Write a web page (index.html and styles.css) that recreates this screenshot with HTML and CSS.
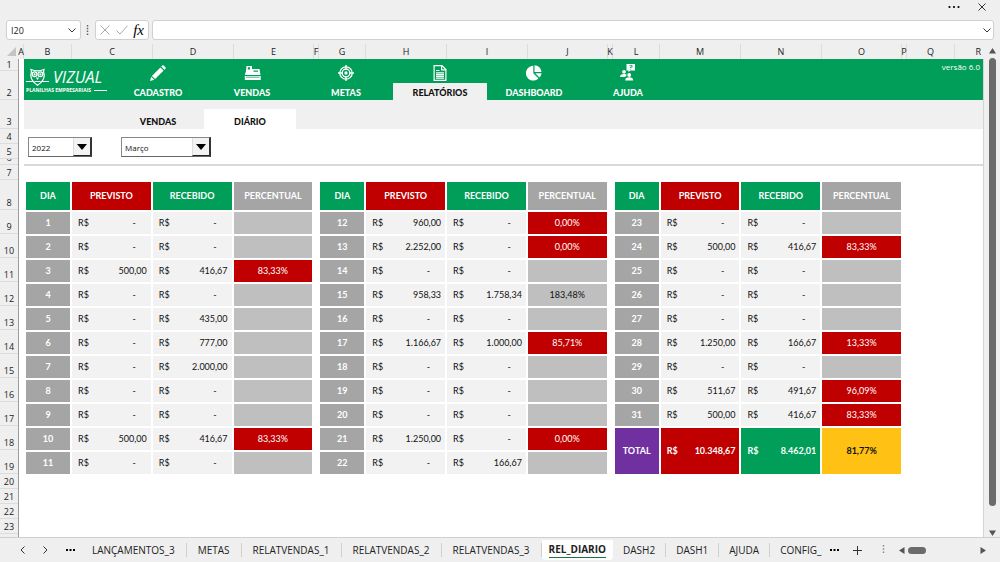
FILE: index.html
```html
<!DOCTYPE html>
<html lang="pt-BR">
<head>
<meta charset="utf-8">
<meta name="viewport" content="width=device-width, initial-scale=1">
<title>REL_DIARIO</title>
<link rel="stylesheet" href="styles.css">
</head>
<body>
<div class="window-bar">
  <button class="plain" aria-label="Mais opções"><svg width="12" height="12" viewBox="0 0 12 12"><circle cx="1.5" cy="6" r="1.1"/><circle cx="6" cy="6" r="1.1"/><circle cx="10.500" cy="6" r="1.1"/></svg></button>
  <button class="plain" aria-label="Fechar"><svg class="line" width="8" height="8" viewBox="0 0 8 8"><path d="M.5.5l7 7M7.500.5l-7 7"/></svg></button>
</div>

<div class="formula-bar">
  <div class="name-box">
    <input type="text" value="I20" aria-label="Caixa de nome">
    <svg class="line" width="8" height="5" viewBox="0 0 8 5"><path d="M.5.5L4 4 7.500.5"/></svg>
  </div>
  <svg class="grip" width="3" height="10" viewBox="0 0 3 10"><path d="M1.500 0v10" stroke="#666" stroke-width="1.500" stroke-dasharray="1.500 1.300"/></svg>
  <div class="formula-actions">
    <button class="plain" aria-label="Cancelar"><svg class="line soft" width="10" height="10" viewBox="0 0 10 10"><path d="M.5.5l9 9M9.500.5l-9 9"/></svg></button>
    <button class="plain" aria-label="Inserir"><svg class="line soft" width="12" height="10" viewBox="0 0 12 10"><path d="M.5 5.500L4 9 11.500.8"/></svg></button>
    <button class="plain fx" aria-label="Inserir função">fx</button>
  </div>
  <div class="formula-input">
    <input type="text" aria-label="Barra de fórmulas">
    <svg class="line" width="8" height="5" viewBox="0 0 8 5"><path d="M.5.5L4 4 7.500.5"/></svg>
  </div>
</div>

<main class="workbook">
  <div class="corner"><svg width="9" height="9" viewBox="0 0 9 9"><path d="M9 0v9H0z" fill="#c4c4c4"/></svg></div>
  <div class="columns">
    <span>A</span><span>B</span><span>C</span><span>D</span><span>E</span><span>F</span><span>G</span><span>H</span><span>I</span><span>J</span><span>K</span><span>L</span><span>M</span><span>N</span><span>O</span><span>P</span><span>Q</span><span class="last">R</span>
  </div>
  <div class="rows">
    <span class="r12">1</span><span class="r29">2</span><span class="r29">3</span><span class="r15">4</span><span class="r15">5</span><span class="r6">6</span><span class="r15">7</span><span class="r30">8</span>
    <span>9</span><span>10</span><span>11</span><span>12</span><span>13</span><span>14</span><span>15</span><span>16</span><span>17</span><span>18</span><span>19</span>
    <span class="r15">20</span><span class="r15">21</span><span class="r15">22</span><span class="r15">23</span>
  </div>

  <div class="sheet">
    <header class="banner">
      <div class="logo">
        <div class="brand">
          <svg width="23" height="18" viewBox="0 0 23 18" fill="none" stroke="#fff" stroke-width="1.200"><path d="M5 1.500c2 .8 4 1.300 6.500 1.300S16 2.300 18 1.500c-.6 1.500-.4 3 .1 4.500.7 4-1.600 8-6.600 11.300C6.500 14 4.300 10 5 6c.4-1.500.6-3 0-4.500z"/><circle cx="8.600" cy="6.300" r="2.400"/><circle cx="14.400" cy="6.300" r="2.400"/><path d="M10.500 9.500l1 1.500 1-1.500M0 13.500h7.500M15.500 13.500H23M8.500 13.500h6"/><circle cx="8.600" cy="6.300" r=".5" fill="#fff"/><circle cx="14.400" cy="6.300" r=".5" fill="#fff"/></svg>
          <span class="brand-name">VIZUAL</span>
        </div>
        <div class="tagline"><span>PLANILHAS EMPRESARIAIS</span></div>
      </div>
      <nav class="menu">
        <a href="#cadastro"><svg width="16" height="16" viewBox="0 0 16 16"><path d="M0 16l1.200-4.300 3.100 3.100zM1.900 10.900l8.500-8.500 3.200 3.200-8.500 8.500zM11.200 1.600l.9-.9c.5-.5 1.300-.5 1.800 0l1.400 1.400c.5.5.5 1.300 0 1.800l-.9.9z"/></svg>CADASTRO</a>
        <a href="#vendas"><svg width="17" height="16" viewBox="0 0 17 16"><path fill-rule="evenodd" d="M2.500 1h5.500v3h7.500l1 6H.8l1.200-4zM3.800 2.200v2.300H6V2.200zM9.500 5.500v1.200H14V5.500zM.8 11h15.900v4H.8zM2 11.800v.7h13.500v-.7z"/></svg>VENDAS</a>
        <a href="#metas"><svg width="16" height="16" viewBox="0 0 16 16" class="stroke"><circle cx="8" cy="8" r="6.200"/><circle cx="8" cy="8" r="3.800"/><path d="M8 0v5M8 11v5M0 8h5M11 8h5"/><circle cx="8" cy="8" r="1" fill="#fff"/></svg>METAS</a>
        <a href="#relatorios" class="active"><svg width="14" height="16" viewBox="0 0 14 16"><path fill-rule="evenodd" d="M.5 0h8.700l4.300 4.300V16H.5zM1.700 1.200v13.600h10.600V5.500H8V1.200zM9.200 1.700v2.600h2.600zM3 5h3.500v1H3zM3 7.200h8v1.200H3zM3 9h8v1.200H3zM3 10.800h8V12H3zM3 12.600h8v1.200H3z"/></svg>RELATÓRIOS</a>
        <a href="#dashboard"><svg width="16" height="16" viewBox="0 0 16 16"><path d="M7.300.8v7.500l5.200 5.200A7.400 7.400 0 1 1 7.300.8zM8.500.3a7.200 7.200 0 0 1 7.100 6.700L8.500 7zM9.300 8.200h6.300a7.300 7.300 0 0 1-2.200 4.300z"/></svg>DASHBOARD</a>
        <a href="#ajuda"><svg width="16" height="17" viewBox="0 0 16 17"><path fill-rule="evenodd" d="M6.500 0H15v6.500h-4.500L8.500 8V6.500h-2zM9.500 1.300v.8h2v.7h-1.300v1.300h.9v-.6h1.300V1.300zM10.200 4.700v.8h.9v-.8z"/><circle cx="4" cy="7.800" r="1.900"/><circle cx="9.200" cy="11" r="1.900"/><path d="M0 13c0-2 1.500-3 4-3 1.300 0 2.300.3 2.800.8C6.300 12 5.500 12.400 5 13zM5.200 16.500c0-2.200 1.500-3.200 4-3.200s4 1 4 3.200z"/></svg>AJUDA</a>
      </nav>
      <span class="version">versão 6.0</span>
    </header>
    <nav class="submenu"><a href="#rel-vendas">VENDAS</a><a href="#rel-diario" class="active">DIÁRIO</a></nav>
    <div class="filters">
      <div class="combo year"><select aria-label="Ano"><option>2022</option></select><span class="arrow"></span></div>
      <div class="combo month"><select aria-label="Mês"><option>Março</option></select><span class="arrow"></span></div>
    </div>

    <div class="report">
      <table>
        <thead><tr><th class="day">DIA</th><th class="red">PREVISTO</th><th>RECEBIDO</th><th class="gray">PERCENTUAL</th></tr></thead>
        <tbody>
          <tr><th>1</th><td class="zero"><span>R$</span>-</td><td class="zero"><span>R$</span>-</td><td class="pct"></td></tr>
          <tr><th>2</th><td class="zero"><span>R$</span>-</td><td class="zero"><span>R$</span>-</td><td class="pct"></td></tr>
          <tr><th>3</th><td><span>R$</span>500,00</td><td><span>R$</span>416,67</td><td class="pct low">83,33%</td></tr>
          <tr><th>4</th><td class="zero"><span>R$</span>-</td><td class="zero"><span>R$</span>-</td><td class="pct"></td></tr>
          <tr><th>5</th><td class="zero"><span>R$</span>-</td><td><span>R$</span>435,00</td><td class="pct"></td></tr>
          <tr><th>6</th><td class="zero"><span>R$</span>-</td><td><span>R$</span>777,00</td><td class="pct"></td></tr>
          <tr><th>7</th><td class="zero"><span>R$</span>-</td><td><span>R$</span>2.000,00</td><td class="pct"></td></tr>
          <tr><th>8</th><td class="zero"><span>R$</span>-</td><td class="zero"><span>R$</span>-</td><td class="pct"></td></tr>
          <tr><th>9</th><td class="zero"><span>R$</span>-</td><td class="zero"><span>R$</span>-</td><td class="pct"></td></tr>
          <tr><th>10</th><td><span>R$</span>500,00</td><td><span>R$</span>416,67</td><td class="pct low">83,33%</td></tr>
          <tr><th>11</th><td class="zero"><span>R$</span>-</td><td class="zero"><span>R$</span>-</td><td class="pct"></td></tr>
        </tbody>
      </table>
      <table>
        <thead><tr><th class="day">DIA</th><th class="red">PREVISTO</th><th>RECEBIDO</th><th class="gray">PERCENTUAL</th></tr></thead>
        <tbody>
          <tr><th>12</th><td><span>R$</span>960,00</td><td class="zero"><span>R$</span>-</td><td class="pct low">0,00%</td></tr>
          <tr><th>13</th><td><span>R$</span>2.252,00</td><td class="zero"><span>R$</span>-</td><td class="pct low">0,00%</td></tr>
          <tr><th>14</th><td class="zero"><span>R$</span>-</td><td class="zero"><span>R$</span>-</td><td class="pct"></td></tr>
          <tr><th>15</th><td><span>R$</span>958,33</td><td><span>R$</span>1.758,34</td><td class="pct">183,48%</td></tr>
          <tr><th>16</th><td class="zero"><span>R$</span>-</td><td class="zero"><span>R$</span>-</td><td class="pct"></td></tr>
          <tr><th>17</th><td><span>R$</span>1.166,67</td><td><span>R$</span>1.000,00</td><td class="pct low">85,71%</td></tr>
          <tr><th>18</th><td class="zero"><span>R$</span>-</td><td class="zero"><span>R$</span>-</td><td class="pct"></td></tr>
          <tr><th>19</th><td class="zero"><span>R$</span>-</td><td class="zero"><span>R$</span>-</td><td class="pct"></td></tr>
          <tr><th>20</th><td class="zero"><span>R$</span>-</td><td class="zero"><span>R$</span>-</td><td class="pct"></td></tr>
          <tr><th>21</th><td><span>R$</span>1.250,00</td><td class="zero"><span>R$</span>-</td><td class="pct low">0,00%</td></tr>
          <tr><th>22</th><td class="zero"><span>R$</span>-</td><td><span>R$</span>166,67</td><td class="pct"></td></tr>
        </tbody>
      </table>
      <table>
        <thead><tr><th class="day">DIA</th><th class="red">PREVISTO</th><th>RECEBIDO</th><th class="gray">PERCENTUAL</th></tr></thead>
        <tbody>
          <tr><th>23</th><td class="zero"><span>R$</span>-</td><td class="zero"><span>R$</span>-</td><td class="pct"></td></tr>
          <tr><th>24</th><td><span>R$</span>500,00</td><td><span>R$</span>416,67</td><td class="pct low">83,33%</td></tr>
          <tr><th>25</th><td class="zero"><span>R$</span>-</td><td class="zero"><span>R$</span>-</td><td class="pct"></td></tr>
          <tr><th>26</th><td class="zero"><span>R$</span>-</td><td class="zero"><span>R$</span>-</td><td class="pct"></td></tr>
          <tr><th>27</th><td class="zero"><span>R$</span>-</td><td class="zero"><span>R$</span>-</td><td class="pct"></td></tr>
          <tr><th>28</th><td><span>R$</span>1.250,00</td><td><span>R$</span>166,67</td><td class="pct low">13,33%</td></tr>
          <tr><th>29</th><td class="zero"><span>R$</span>-</td><td class="zero"><span>R$</span>-</td><td class="pct"></td></tr>
          <tr><th>30</th><td><span>R$</span>511,67</td><td><span>R$</span>491,67</td><td class="pct low">96,09%</td></tr>
          <tr><th>31</th><td><span>R$</span>500,00</td><td><span>R$</span>416,67</td><td class="pct low">83,33%</td></tr>
          <tr class="total"><th rowspan="2">TOTAL</th><td class="red" rowspan="2"><span>R$</span>10.348,67</td><td class="green" rowspan="2"><span>R$</span>8.462,01</td><td class="pct amber" rowspan="2">81,77%</td></tr>
          <tr></tr>
        </tbody>
      </table>
    </div>
  </div>

  <div class="vscroll">
    <svg width="7" height="6" viewBox="0 0 7 6"><path d="M3.500 0L7 5.500H0z"/></svg>
    <div class="thumb"></div>
    <svg width="7" height="6" viewBox="0 0 7 6"><path d="M3.500 6L7 .5H0z"/></svg>
  </div>
</main>

<footer class="sheet-bar">
  <div class="nav-buttons">
    <button class="plain" aria-label="Anterior"><svg class="line" width="5" height="8" viewBox="0 0 5 8"><path d="M4.500.5L1 4l3.500 3.500"/></svg></button>
    <button class="plain" aria-label="Próxima"><svg class="line" width="5" height="8" viewBox="0 0 5 8"><path d="M.5.5L4 4 .5 7.500"/></svg></button>
    <button class="plain" aria-label="Mais planilhas"><svg width="9" height="4" viewBox="0 0 9 4"><path d="M0 1h2v2H0zM3.500 1h2v2h-2zM7 1h2v2H7z"/></svg></button>
  </div>
  <nav class="tabs">
    <a href="#l3">LANÇAMENTOS_3</a><a href="#m">METAS</a><a href="#r1">RELATVENDAS_1</a><a href="#r2">RELATVENDAS_2</a><a href="#r3">RELATVENDAS_3</a><a href="#rd" class="active"><span>REL_DIARIO</span></a><a href="#d2">DASH2</a><a href="#d1">DASH1</a><a href="#a">AJUDA</a><a href="#c" class="cut">CONFIG_</a>
  </nav>
  <button class="plain" aria-label="Lista de planilhas"><svg width="9" height="4" viewBox="0 0 9 4"><path d="M0 1h2v2H0zM3.500 1h2v2h-2zM7 1h2v2H7z"/></svg></button>
  <button class="plain add" aria-label="Nova planilha"><svg class="line" width="9" height="9" viewBox="0 0 9 9"><path d="M4.500 0v9M0 4.500h9"/></svg></button>
  <svg class="grip" width="3" height="10" viewBox="0 0 3 10"><path d="M1.500 0v10" stroke="#888" stroke-width="1.500" stroke-dasharray="1.500 1.800"/></svg>
  <div class="hscroll">
    <svg width="6" height="7" viewBox="0 0 6 7"><path d="M0 3.500L5.500 0v7z"/></svg>
    <div class="thumb"></div>
    <svg class="end" width="6" height="7" viewBox="0 0 6 7"><path d="M6 3.500L.5 0v7z"/></svg>
  </div>
</footer>
</body>
</html>
```
FILE: styles.css
```css
* { box-sizing: border-box; }

body {
  margin: 0;
  min-height: 100vh;
  display: flex;
  flex-direction: column;
  background: #efefef;
  color: #222;
  font-family: "Open Sans", "Noto Sans", sans-serif;
  font-size: 10px;
}

svg { display: block; flex: none; }
a { color: inherit; text-decoration: none; }
.line { fill: none; stroke: #333; stroke-width: 1; }
.soft { stroke: #aaa; }

.plain {
  display: flex;
  align-items: center;
  justify-content: center;
  padding: 0;
  border: 0;
  background: none;
  font: inherit;
  color: inherit;
}

/* window and formula bars */
.window-bar {
  display: flex;
  justify-content: flex-end;
  align-items: center;
  gap: 18px;
  height: 14px;
  padding-right: 14px;
}

.formula-bar {
  display: flex;
  align-items: center;
  gap: 3px;
  padding: 6px 6px 4px;
}

.name-box, .formula-actions, .formula-input {
  display: flex;
  align-items: center;
  height: 20px;
  background: #fff;
  border: 1px solid #d0d0d0;
  border-radius: 3px;
}

.name-box { width: 75px; padding: 0 4px; }
.formula-input { flex: 1; padding: 0 2px; }
.formula-bar .grip { margin: 0 3px 0 2px; }

.formula-bar input {
  flex: 1;
  min-width: 0;
  padding: 0;
  border: 0;
  outline: 0;
  background: none;
  font: inherit;
  font-size: 9px;
  color: #222;
}

.formula-actions { width: 54px; padding: 0 4px; justify-content: space-between; }

.fx { font-family: "Liberation Serif", serif; font-style: italic; font-size: 15px; line-height: 16px; color: #000; }

/* workbook grid */
.workbook {
  flex: 1;
  display: grid;
  grid-template-columns: 19px 1fr 16px;
  grid-template-rows: 15px 1fr;
}

.corner { display: flex; justify-content: flex-end; align-items: flex-end; padding: 0 3px 3px 0; }

.columns {
  display: grid;
  grid-template-columns: 5fr 48fr 81fr 81fr 80fr 5fr 47fr 81fr 81fr 80fr 5fr 47fr 81fr 81fr 80fr 5fr 48fr 29fr;
}

.columns span {
  display: flex;
  justify-content: center;
  min-width: 0;
  border-right: 1px solid #dcdcdc;
  font-size: 9px;
  line-height: 15px;
}

.columns .last { justify-content: flex-end; padding-right: 3px; border: 0; }

.rows { border-right: 1px solid #9c9c9c; }

.rows span {
  display: flex;
  align-items: flex-end;
  justify-content: center;
  height: 24px;
  border-bottom: 1px solid #dcdcdc;
  font-size: 9px;
  line-height: 13px;
  overflow: hidden;
}

.rows .r12 { height: 12px; line-height: 11px; }
.rows .r29 { height: 29px; }
.rows .r30 { height: 30px; }
.rows .r15 { height: 15px; line-height: 12px; }
.rows .r6 { height: 6px; }

.sheet { background: #fff; border-right: 1px solid #d4d4d4; font-family: Lato, "Open Sans", sans-serif; }

/* banner */
.banner {
  display: flex;
  height: 41px;
  margin-left: 5px;
  background: #009e58;
  color: #fff;
}

.logo { width: 87px; padding: 8px 0 0 2px; }
.brand { display: flex; align-items: center; gap: 4px; height: 20px; }
.brand-name { font: italic 16px/20px "Open Sans", sans-serif; }
.tagline { display: flex; align-items: center; gap: 3px; font: bold 5px/7px "Open Sans", sans-serif; white-space: nowrap; }
.tagline::after { content: ""; width: 13px; height: 1px; background: #fff; }

.menu { display: flex; flex: 1; font-size: 9px; font-weight: 900; }

.menu a {
  display: grid;
  grid-template-rows: 17px 17px;
  row-gap: 3px;
  justify-items: center;
  align-items: center;
  width: 94px;
  padding-top: 5px;
  line-height: 17px;
}

.menu svg { fill: #fff; }
.menu .stroke { fill: none; stroke: #fff; stroke-width: 1.3; }
.menu .active { color: #111; background: linear-gradient(transparent 24px, #f0f0f0 24px); }
.version { padding: 2px 3px; font: 8px/12px "Open Sans", sans-serif; }

.submenu {
  display: flex;
  align-items: flex-end;
  height: 29px;
  margin-left: 5px;
  padding-left: 88px;
  background: #f0f0f0;
  color: #111;
  font-size: 9px;
  font-weight: 900;
}

.submenu a { width: 92px; height: 20px; line-height: 26px; text-align: center; }
.submenu .active { background: #fff; }

/* filters */
.filters {
  display: flex;
  gap: 29px;
  margin-left: 5px;
  padding: 8px 0 7px 4px;
  border-bottom: 2px solid #d9d9d9;
}

.combo { display: grid; height: 20px; border: 1px solid #888; border-right: 2px solid #333; border-bottom-color: #666; background: #fff; }
.year { width: 64px; }
.month { width: 90px; }

.combo select, .arrow { grid-area: 1 / 1; }

.combo select {
  appearance: none;
  min-width: 0;
  padding: 0 3px;
  border: 0;
  background: none;
  font: 8px "Open Sans", sans-serif;
  color: #111;
}

.arrow {
  display: grid;
  place-items: center;
  justify-self: end;
  width: 17px;
  border-left: 1px solid #ddd;
  border-bottom: 1px solid #222;
  background: #f3f3f3;
  pointer-events: none;
}

.arrow::before { content: ""; border: 5px solid transparent; border-top: 6px solid #000; border-bottom: 0; }

/* daily report */
.report {
  display: grid;
  grid-template-columns: 290fr 290fr 290fr;
  column-gap: 4px;
  padding: 14px 80px 0 5px;
}

table { width: 100%; table-layout: fixed; border-collapse: separate; border-spacing: 2px; font-size: 9px; }

th, td { height: 22px; padding: 0; line-height: 12px; }
th { background: #a5a5a5; color: #fff; font-weight: bold; text-align: center; }
thead th { height: 28px; background: #009e58; }
.day { width: 44px; }
td { padding: 0 4px 0 6px; background: #f2f2f2; color: #111; text-align: right; }
td span { float: left; }
.zero { padding-right: 15px; }
.pct { padding: 0; background: #bfbfbf; text-align: center; }
.low, .red, thead .red { background: #c00000; color: #fff; }
thead .gray { background: #a5a5a5; }
.total th { background: #7030a0; }
.total td { font-weight: bold; }
.green { background: #009e58; color: #fff; }
.amber { background: #ffc114; }

/* scroll bars */
.vscroll {
  grid-area: 1 / 3 / 3 / 4;
  display: flex;
  flex-direction: column;
  align-items: center;
  gap: 4px;
  padding: 4px 0 1px 1px;
}

.thumb { background: #6b6b6b; border-radius: 4px; }
.vscroll .thumb { width: 7px; flex: 1; margin-bottom: 20px; }
.vscroll svg, .hscroll svg { fill: #555; }

/* sheet tabs */
.sheet-bar {
  display: flex;
  align-items: center;
  height: 25px;
  padding-right: 14px;
  border-top: 1px solid #cfcfcf;
}

.nav-buttons { display: flex; gap: 18px; padding-left: 20px; }

.tabs { display: flex; flex: 1; align-items: center; padding-left: 6px; min-width: 0; font-size: 10px; }
.tabs a { padding: 0 11px; line-height: 14px; border-right: 1px solid #cfcfcf; white-space: nowrap; }
.tabs .active { align-self: flex-start; height: 20px; padding: 1px 7px 0; border: 0; border-radius: 0 0 4px 4px; background: #fff; font-weight: bold; }
.tabs .active span { display: block; line-height: 16px; border-bottom: 1px solid #1e7145; }
.tabs .active ~ a { padding: 0 10px; }
.tabs .active ~ .cut { padding-right: 0; border: 0; }
.add { margin: 0 20px 0 14px; }

.hscroll { display: flex; align-items: center; gap: 3px; width: 87px; margin-left: 14px; }
.hscroll .thumb { width: 18px; height: 7px; }
.hscroll .end { margin-left: auto; }
```
